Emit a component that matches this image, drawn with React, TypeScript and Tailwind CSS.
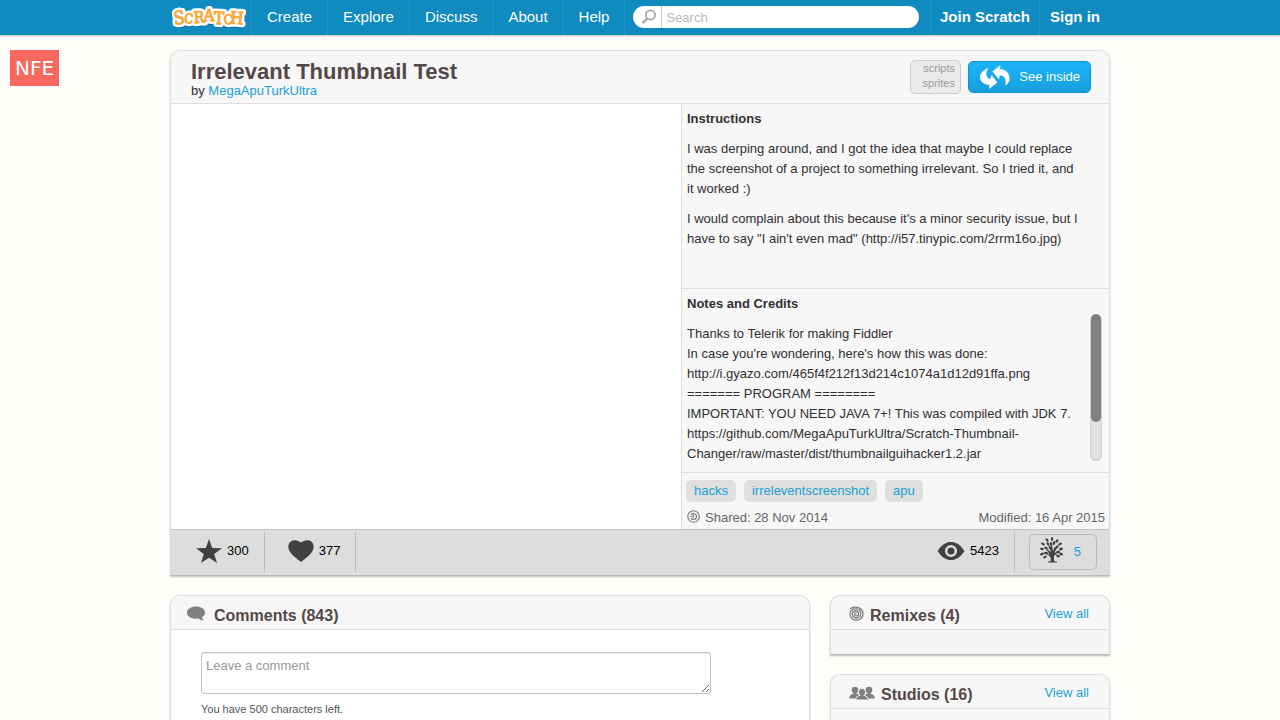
import type { ReactNode } from 'react'

const navItems = ['Create', 'Explore', 'Discuss', 'About', 'Help']
const tags = ['hacks', 'irreleventscreenshot', 'apu']

const notes = [
  'Thanks to Telerik for making Fiddler',
  "In case you're wondering, here's how this was done:",
  'http://i.gyazo.com/465f4f212f13d214c1074a1d12d91ffa.png',
  '======= PROGRAM ========',
  'IMPORTANT: YOU NEED JAVA 7+! This was compiled with JDK 7.',
  'https://github.com/MegaApuTurkUltra/Scratch-Thumbnail-Changer/raw/master/dist/thumbnailguihacker1.2.jar'
]

const logoLetters = [
  { char: 'S', x: 7, y: 20, size: 19, turn: -6 },
  { char: 'C', x: 17, y: 19, size: 14, turn: 4 },
  { char: 'R', x: 27, y: 19, size: 17, turn: -4 },
  { char: 'A', x: 37, y: 17, size: 18, turn: 0 },
  { char: 'T', x: 47, y: 20, size: 18, turn: 3 },
  { char: 'C', x: 56, y: 20, size: 14, turn: -3 },
  { char: 'H', x: 65, y: 20, size: 18, turn: 4 }
]

const logoPasses = [
  { fill: '#0a6a97', stroke: '#0a6a97', width: 6, dy: 1 },
  { fill: '#ffffff', stroke: '#ffffff', width: 6, dy: 0 },
  { fill: '#f9a83a', stroke: '#f9a83a', width: 1, dy: 0 }
]

const Logo = () => (
  <svg width="74" height="26" viewBox="0 0 74 26" role="img" aria-label="Scratch">
    {logoPasses.map((pass, i) => (
      <g
        key={i}
        fill={pass.fill}
        stroke={pass.stroke}
        strokeWidth={pass.width}
        strokeLinejoin="round"
        fontFamily="'DejaVu Serif Condensed', 'DejaVu Serif', serif"
        textAnchor="middle"
      >
        {logoLetters.map((l, j) => (
          <text
            key={j}
            x={l.x}
            y={l.y + pass.dy}
            fontSize={l.size - 1}
            transform={`rotate(${l.turn} ${l.x} 13)`}
          >
            {l.char}
          </text>
        ))}
      </g>
    ))}
  </svg>
)

const SearchIcon = () => (
  <svg width="16" height="16" viewBox="0 0 16 16" fill="none" stroke="#aaa">
    <circle cx="9.5" cy="6" r="4.6" strokeWidth="1.8" />
    <path d="M6.2 9.6 1.5 14.2" strokeWidth="2.4" />
  </svg>
)

const SwapIcon = () => (
  <svg width="30" height="24" viewBox="0 0 30 24" fill="#fff">
    <path d="M8.500 3C3.500 5 0 8 0 12c0 4.500 4 7.500 9.500 8L9 24l8.500-6.500-6-7.500-1 4C8 13.500 6.500 12 6.300 9.500 6.200 7 7 5 8.500 3z" />
    <path d="M25.500 20.500c3-2 4.500-4.500 4-8C29 7.500 25.500 4.500 20 4L20.500 0 12.500 6.500 19 14.500l.8-4.200c3.200.2 5 1.700 5.600 4.200.4 2 .3 4 .1 6z" />
  </svg>
)

const StarIcon = () => (
  <svg width="26" height="24" viewBox="0 0 26 24" fill="#414042">
    <path d="M13 0l3.200 8.900 9.800.3-7.800 5.700L21 24l-8-5.300L5 24l2.800-9.100L0 9.200l9.800-.3z" />
  </svg>
)

const HeartIcon = () => (
  <svg width="26" height="22" viewBox="0 0 26 22" fill="#414042">
    <path d="M13 22C9.500 19 .3 13.500.3 6.800.3 3 3 .2 6.500.2c2.800 0 5 1.300 6.500 2.300C14.500 1.500 16.700.2 19.500.2c3.500 0 6.200 2.800 6.200 6.600C25.700 13.500 16.500 19 13 22z" />
  </svg>
)

const EyeIcon = () => (
  <svg width="28" height="20" viewBox="0 0 28 20">
    <path d="M.5 10C5 3.500 9 1 14 1s9 2.500 13.500 9C23 16.500 19 19 14 19S5 16.500.5 10z" fill="#414042" />
    <circle cx="14" cy="10" r="4.800" fill="#414042" stroke="#ddd" strokeWidth="2.600" />
  </svg>
)

const treeLeaves = [
  [12, 2, 90], [7, 3, 50], [17, 4, 130], [3, 7, 30], [8, 7, 60], [14, 6, 110], [20, 7, 150],
  [2, 12, 10], [6, 11, 30], [17, 10, 140], [21, 12, 160], [2, 17, -20], [6, 16, -10], [18, 15, 170],
  [21, 17, 20], [11, 7, 80], [18, 19, 20], [5, 20, -30], [10, 11, 60], [15, 12, 120]
]

const TreeIcon = () => (
  <svg width="23" height="26" viewBox="0 0 23 26" fill="#414042">
    <path d="M10.500 25.500H8v-1h2.500c.6-2.500.4-4-1-5.500L4.500 16l5 1.500L5 10l5.500 5L11.500 5l1.500 9 4.500-6-3 8 5.500-2.500-6 5.500c-.4 2-.2 3.500.5 5.500H17v1z" />
    {treeLeaves.map(([x, y, r], i) => (
      <ellipse key={i} cx={x} cy={y} rx="2" ry="1.200" transform={`rotate(${r} ${x} ${y})`} />
    ))}
  </svg>
)

const BubbleIcon = () => (
  <svg width="18" height="15" viewBox="0 0 18 15" fill="#808080">
    <path d="M9 .5c5 0 9 2.500 9 6 0 2-1.200 3.700-3 4.800.2 1.200.8 2.200 2 3.200-2.500 0-4.300-.8-5.500-2-7 .9-11.500-2-11.500-6C0 3 4 .5 9 .5z" />
  </svg>
)

const SpiralIcon = () => (
  <svg width="15" height="15" viewBox="0 0 15 15" fill="none" stroke="#7d7d7d" strokeWidth="1.300">
    <path d="M1 3C4.500-.3 13.500.5 14 7.500c.2 4-3 6.700-6.500 6.700S1 11.500 1 8s2.700-5.200 6-5.200 4.800 2 4.800 4.700-2 4.500-4.400 4.500S3.300 10 3.300 8s1.600-3 3.500-3 2.800 1.200 2.800 2.700S8.500 9.900 7.300 9.900 5.600 8.900 5.800 8s1.200-1 1.700-.5" />
  </svg>
)

const PeopleIcon = () => (
  <svg width="26" height="14" viewBox="0 0 26 14" fill="#7f7f7f">
    <circle cx="6" cy="4" r="3.300" />
    <circle cx="20" cy="4" r="3.300" />
    <path d="M0 12.500c.5-3 2-4.100 4.500-4.800V6h3v1.700C11 8 11.500 10 12 12.500z" />
    <path d="M26 12.500c-.5-3-2-4.100-4.500-4.800V6h-3v1.700C15 8 14.500 10 14 12.500z" />
    <g stroke="#f7f7f7" strokeWidth="1">
      <path d="M6.500 14c.5-3 2-4 4.500-4.700h4c2.500.7 4 1.700 4.500 4.700z" />
      <circle cx="13" cy="6" r="3.700" />
    </g>
    <path d="M11.500 8h3v2.500h-3z" />
  </svg>
)

const ShareIcon = () => (
  <svg width="13" height="13" viewBox="0 0 13 13" fill="none" stroke="#777">
    <circle cx="6.500" cy="6.500" r="5.700" strokeWidth="1.100" />
    <path d="M4 4.600C5.500 3 9.500 3.200 9.500 6.500S5.500 10 4 8.400" strokeWidth="1.200" />
    <path d="M3.500 6.300h3.200M6.500 4.800v3" strokeWidth="1" />
  </svg>
)

interface BoxHeaderProps {
  icon: ReactNode
  title: string
  className: string
  link?: boolean
}

const BoxHeader = ({ icon, title, className, link }: BoxHeaderProps) => (
  <div className={`flex h-[34px] items-center rounded-t-[10px] border-b border-[#ddd] bg-[#f7f7f7] pt-0.5 ${className}`}>
    {icon}
    <h2 className="pt-1 text-base font-bold text-[#554747]">{title}</h2>
    {link && <a href="#" className="ml-auto text-[13px] text-[#1aa0d8]">View all</a>}
  </div>
)

const Header = () => (
  <header className="bg-[#0f8bc0] shadow-[0_1px_2px_rgba(0,0,0,0.25)]">
    <div className="mx-auto flex h-[35px] w-full max-w-[940px] text-[15px] leading-[33px] text-white">
      <a href="#" className="w-[81px] px-0.5 pt-1"><Logo /></a>
      <nav className="flex">
        {navItems.map((item) => (
          <a key={item} href="#" className="border-l border-[#1b98cd] px-[15px]">{item}</a>
        ))}
      </nav>
      <div className="flex flex-1 items-start border-l border-[#1b98cd] pt-1.5 pr-[11px] pl-2">
        <form className="flex h-[22px] flex-1 items-center overflow-hidden rounded-[11px] bg-white">
          <button type="button" aria-label="Search" className="flex h-full w-[29px] items-center justify-center border-r border-[#ccc] pl-1">
            <SearchIcon />
          </button>
          <input
            type="text"
            aria-label="Search projects"
            placeholder="Search"
            className="h-full min-w-0 flex-1 px-1 text-[13px] text-[#333] outline-none placeholder:text-[#b8b8b8]"
          />
        </form>
      </div>
      <a href="#" className="border-l border-[#1b98cd] px-[9px] font-bold">Join Scratch</a>
      <a href="#" className="border-l border-[#1b98cd] px-2.5 font-bold">Sign in</a>
    </div>
  </header>
)

const ProjectHeader = () => (
  <div className="flex h-[53px] justify-between rounded-t-[10px] border-b border-[#ddd] bg-[#f7f7f7] pr-[18px] pl-5">
    <div className="pt-[9px]">
      <h1 className="text-[22px] leading-6 font-bold text-[#554747]">Irrelevant Thumbnail Test</h1>
      <p className="leading-[14px]">
        by <a href="#" className="text-[#1aa0d8]">MegaApuTurkUltra</a>
      </p>
    </div>
    <div className="flex items-center gap-[7px]">
      <div className="h-[34px] w-[51px] rounded-[5px] border border-[#ccc] bg-[#ebebeb] pr-[5px] text-right text-[11px] leading-[15px] text-[#999]">
        <p>scripts</p>
        <p>sprites</p>
      </div>
      <button
        type="button"
        className="flex h-8 w-[123px] items-center justify-between rounded-[5px] border border-[#1591ca] bg-linear-to-b from-[#1cb3fb] to-[#179fdc] pr-2.5 pl-[11px] text-white"
      >
        <SwapIcon />
        See inside
      </button>
    </div>
  </div>
)

const ProjectInfo = () => (
  <div className="flex w-[428px] flex-col border-l border-[#ddd] bg-[#f7f7f7] leading-5">
    <section className="h-[185px] border-b border-[#ddd] py-[5px] pr-7 pl-[5px]">
      <h3 className="font-bold">Instructions</h3>
      <p className="mt-2.5">
        I was derping around, and I got the idea that maybe I could replace the screenshot of a
        project to something irrelevant. So I tried it, and it worked :)
      </p>
      <p className="mt-2.5">
        I would complain about this because it's a minor security issue, but I have to say "I ain't
        even mad" (http://i57.tinypic.com/2rrm16o.jpg)
      </p>
    </section>

    <section className="h-[184px] border-b border-[#ddd] py-[5px] pr-[7px] pl-[5px]">
      <h3 className="font-bold">Notes and Credits</h3>
      <div className="flex h-[147px] justify-between">
        <div className="w-[400px] overflow-hidden pt-2.5">
          {notes.map((line) => <p key={line}>{line}</p>)}
        </div>
        <div className="w-3 rounded-md bg-[#e4e4e4] px-px shadow-[inset_0_0_3px_rgba(0,0,0,0.2)]">
          <div className="h-[108px] rounded-md bg-[#808080]" />
        </div>
      </div>
    </section>

    <div className="flex gap-2 px-1 pt-[7px]">
      {tags.map((tag) => (
        <a key={tag} href="#" className="rounded-[5px] bg-[#dfdfdf] px-2 leading-[22px] text-[#1aa0d8]">{tag}</a>
      ))}
    </div>
    <div className="flex justify-between pt-1.5 pr-1 pl-[5px] text-[#666]">
      <span className="flex gap-[5px]">
        <span className="pt-0.5"><ShareIcon /></span>
        Shared: 28 Nov 2014
      </span>
      <span>Modified: 16 Apr 2015</span>
    </div>
  </div>
)

const ProjectStats = () => (
  <div className="flex h-[46px] items-start border-t border-[#c4c4c4] bg-[#ddd] pt-0.5 pr-3 pl-[25px] text-black">
    <button type="button" className="flex h-10 items-center gap-[5px] border-r border-[#bbb] pr-[15px] pb-0.5">
      <StarIcon />300
    </button>
    <button type="button" className="flex h-10 items-center gap-[5px] border-r border-[#bbb] pr-[15px] pb-0.5 pl-[23px]">
      <HeartIcon />377
    </button>
    <div className="ml-auto flex h-10 items-center gap-[5px] border-r border-[#bbb] pr-[15px] pb-0.5">
      <EyeIcon />5423
    </div>
    <a
      href="#"
      className="mt-0.5 ml-3.5 flex h-9 w-[68px] items-center justify-between rounded-[5px] border border-[#bbb] pr-[15px] pb-1 pl-2.5 text-[#1aa0d8]"
    >
      <TreeIcon />
      <span className="pt-1">5</span>
    </a>
  </div>
)

const App = () => {
  return (
    <div className="relative flex min-h-screen flex-col bg-[#fffefb] font-['Liberation_Sans',Arial,sans-serif] text-[13px] text-[#322f31]">
      <Header />

      {/* Page flag */}
      <div className="absolute top-[50px] left-2.5 bg-[#f7695f] px-[5px] font-['DejaVu_Sans',sans-serif] text-xl leading-9 text-white">
        NFE
      </div>

      <main className="mx-auto flex w-full max-w-[940px] flex-1 flex-col gap-[19px] pt-[15px]">
        {/* Project */}
        <div className="rounded-t-[10px] border border-[#ddd] border-b-[#bbb] shadow-[0_1px_2px_rgba(0,0,0,0.25)]">
          <ProjectHeader />
          <div className="flex min-h-[425px]">
            <div className="flex-1 bg-white" />
            <ProjectInfo />
          </div>
          <ProjectStats />
        </div>

        <div className="flex flex-1 gap-5">
          {/* Comments */}
          <section className="flex-1 rounded-t-[10px] border border-b-0 border-[#ddd] bg-white shadow-[0_1px_2px_rgba(0,0,0,0.2)]">
            <BoxHeader className="gap-[9px] pl-4" icon={<BubbleIcon />} title="Comments (843)" />
            <form className="px-[30px] pt-[22px]">
              <textarea
                aria-label="Leave a comment"
                placeholder="Leave a comment"
                className="block h-[42px] w-full max-w-[510px] resize rounded-[3px] border border-[#c4c4c4] px-1 py-1 leading-[18px] shadow-[inset_0_1px_1px_rgba(0,0,0,0.08)] outline-none placeholder:text-[#999]"
              />
              <p className="pt-[7px] text-[11px] leading-4 text-[#555]">You have 500 characters left.</p>
            </form>
          </section>

          <aside className="flex w-[280px] flex-col gap-[19px]">
            {/* Remixes */}
            <section className="rounded-t-[10px] border border-[#ddd] border-b-[#bbb] bg-[#f5f5f5] shadow-[0_1px_2px_rgba(0,0,0,0.3)]">
              <BoxHeader className="gap-1.5 pr-5 pl-[18px]" icon={<SpiralIcon />} title="Remixes (4)" link />
              <div className="h-6" />
            </section>

            {/* Studios */}
            <section className="flex-1 rounded-t-[10px] border border-b-0 border-[#ddd] bg-[#f7f7f7] shadow-[0_1px_2px_rgba(0,0,0,0.2)]">
              <BoxHeader className="gap-1.5 pr-5 pl-[18px]" icon={<PeopleIcon />} title="Studios (16)" link />
            </section>
          </aside>
        </div>
      </main>
    </div>
  )
}

export default App
